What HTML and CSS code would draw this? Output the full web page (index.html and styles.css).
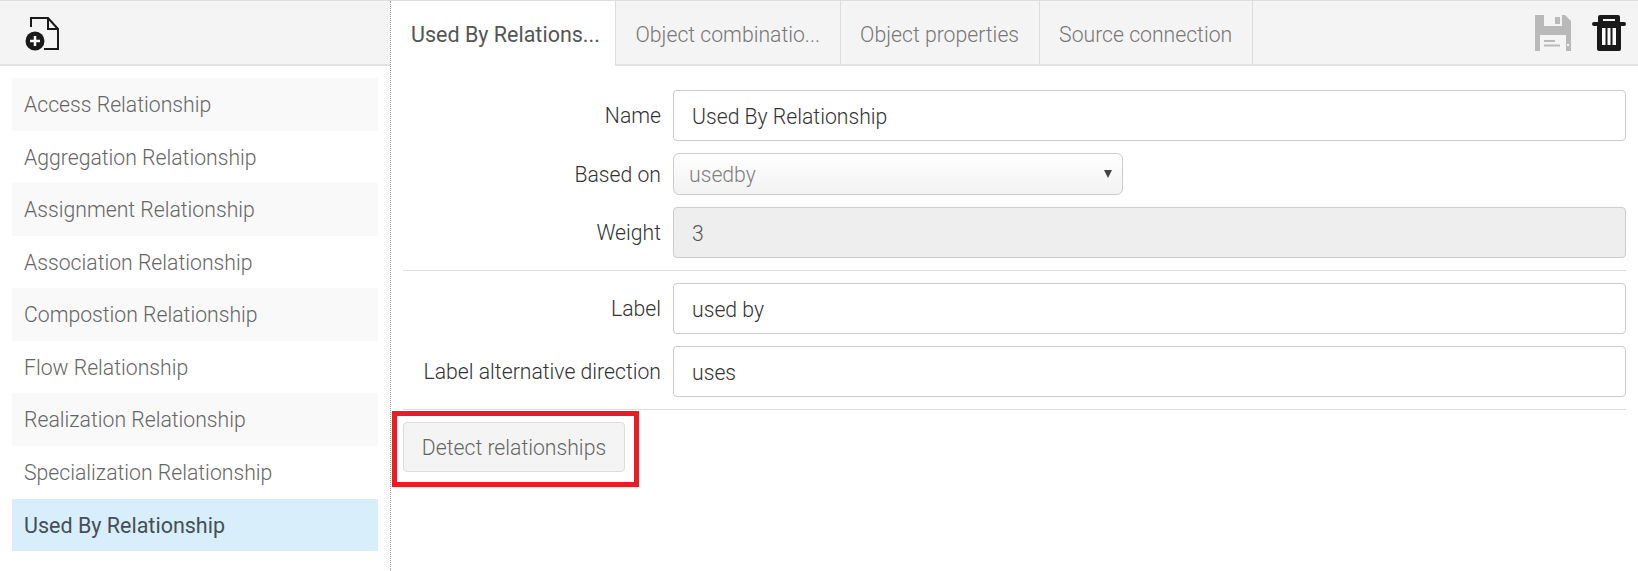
FILE: index.html
```html
<!DOCTYPE html>
<html lang="en">
<head>
  <meta charset="UTF-8" />
  <title>Relationship types</title>
  <link rel="stylesheet" href="styles.css">
</head>
<body>
  <div class="app">
    <aside class="sidebar">
      <div class="sidebar-bar">
        <svg class="icon-new" width="35" height="36" viewBox="0 0 35 36">
          <path d="M6 10V1h17l10 11v20H19" fill="none" stroke="#1a1a1a" stroke-width="2"/>
          <path d="M23 1v11h10" fill="none" stroke="#1a1a1a" stroke-width="2"/>
          <circle cx="10" cy="24" r="9.500" fill="#1a1a1a"/>
          <path d="M5 24h10M10 19v10" stroke="#fff" stroke-width="2.500"/>
        </svg>
      </div>
      <ul class="type-list">
        <li>Access Relationship</li>
        <li>Aggregation Relationship</li>
        <li>Assignment Relationship</li>
        <li>Association Relationship</li>
        <li>Compostion Relationship</li>
        <li>Flow Relationship</li>
        <li>Realization Relationship</li>
        <li>Specialization Relationship</li>
        <li class="active">Used By Relationship</li>
      </ul>
    </aside>

    <main class="content">
      <div class="tabs">
        <a class="tab active">Used By Relations...</a>
        <a class="tab">Object combinatio...</a>
        <a class="tab">Object properties</a>
        <a class="tab">Source connection</a>
        <div class="tools">
          <svg width="36" height="36" viewBox="0 0 36 36">
            <path d="M0 0h30l6 6v30H0z" fill="#b9b9b9"/>
            <rect x="9" y="0" width="18" height="11" fill="#f4f4f4"/>
            <rect x="20" y="2" width="5" height="7" fill="#b9b9b9"/>
            <rect x="5" y="20" width="26" height="16" fill="#f4f4f4"/>
            <path d="M9 26h11M9 30.500h16" stroke="#b9b9b9" stroke-width="2"/>
            <rect x="32" y="29" width="2" height="2" fill="#f4f4f4"/>
          </svg>
          <svg width="34" height="36" viewBox="0 0 34 36">
            <rect x="6" y="0" width="22" height="9" rx="2" fill="#1a1a1a"/>
            <rect x="11" y="4" width="12" height="2" fill="#f4f4f4"/>
            <rect x="0" y="7" width="34" height="4" rx="2" fill="#1a1a1a"/>
            <path d="M5 11h24v23a2 2 0 0 1-2 2H7a2 2 0 0 1-2-2z" fill="#1a1a1a"/>
            <rect x="10" y="13" width="14" height="17" fill="#fff"/>
            <path d="M14.500 13v17M19.500 13v17" stroke="#1a1a1a" stroke-width="2"/>
          </svg>
        </div>
      </div>

      <form class="form">
        <div class="row">
          <label>Name</label>
          <input class="field" type="text" value="Used By Relationship">
        </div>
        <div class="row">
          <label>Based on</label>
          <div class="select-wrap">
            <select class="select"><option>usedby</option></select>
          </div>
        </div>
        <div class="row">
          <label>Weight</label>
          <input class="field" type="text" value="3" disabled>
        </div>
        <hr>
        <div class="row">
          <label>Label</label>
          <input class="field" type="text" value="used by">
        </div>
        <div class="row">
          <label>Label alternative direction</label>
          <input class="field" type="text" value="uses">
        </div>
        <hr>
        <div class="actions">
          <button class="btn" type="button">Detect relationships</button>
          <span class="highlight"></span>
        </div>
      </form>
    </main>
  </div>
</body>
</html>
```

FILE: styles.css
```css
* {
  box-sizing: border-box;
}
body {
  margin: 0;
  font-family: Roboto, "Liberation Sans", sans-serif;
  font-size: 21.2px;
  font-weight: 300;
  color: #333;
  background: #fff;
}
.app {
  display: flex;
  height: 571px;
  overflow: hidden;
  border-top: 1px solid #ddd;
}
.sidebar {
  width: 391px;
  flex: none;
  border-right: 1px dotted #999;
}
.sidebar-bar {
  height: 65px;
  padding: 16px 0 0 25px;
  background: #f4f4f4;
  border-bottom: 2px solid #e2e2e2;
}
.icon-new {
  display: block;
}
.type-list {
  list-style: none;
  margin: 12px 12px 0;
  padding: 0;
}
.type-list li {
  padding: 13px 12px 11px;
  line-height: 28.57px;
  color: #666;
}
.type-list li:nth-child(odd) {
  background: #f9f9f9;
}
.type-list li.active {
  background: #d8eefa;
  color: #444f57;
  font-size: 21.5px;
  font-weight: 400;
}
.content {
  flex: 1;
  min-width: 0;
}
.tabs {
  display: flex;
  height: 65px;
  background: #f4f4f4;
  border-bottom: 2px solid #e2e2e2;
}
.tab {
  display: flex;
  align-items: center;
  height: 65px;
  padding: 1px 19.500px 0;
  color: #777;
  border-right: 1px solid #ddd;
  white-space: nowrap;
}
.tab.active {
  width: 225px;
  padding: 1px 0 0 20px;
  background: #fff;
  color: #555;
  font-size: 21.5px;
  font-weight: 400;
}
.tools {
  margin-left: auto;
  display: flex;
  gap: 21px;
  padding: 14px 12px 0 0;
}
.tools svg {
  display: block;
}
.form {
  padding: 24px 12px 0;
}
.row {
  display: flex;
  align-items: center;
  gap: 12px;
  margin-bottom: 12px;
}
.row label {
  width: 258px;
  flex: none;
  text-align: right;
}
.field {
  flex: 1;
  min-width: 0;
  height: 51px;
  padding: 2px 18px 0;
  font: inherit;
  color: #333;
  background: #fff;
  border: 1px solid #ccc;
  border-radius: 4px;
}
.field:disabled {
  background: #eee;
  color: #555;
  opacity: 1;
}
.select-wrap {
  position: relative;
  width: 450px;
}
.select-wrap::after {
  content: "";
  position: absolute;
  right: 11px;
  top: 17px;
  border-left: 4.500px solid transparent;
  border-right: 4.500px solid transparent;
  border-top: 8px solid #444;
}
.select {
  display: block;
  width: 100%;
  height: 42px;
  padding: 0 15px;
  font: inherit;
  color: #808080;
  background: linear-gradient(#fff, #f2f2f2);
  border: 1px solid #ccc;
  border-radius: 6px;
  appearance: none;
}
hr {
  height: 1px;
  margin: 12px 0;
  border: 0;
  background: #ddd;
}
.actions {
  position: relative;
}
.btn {
  display: block;
  width: 222px;
  height: 50px;
  font: inherit;
  color: #666;
  background: #f4f4f4;
  border: 1px solid #ddd;
  border-radius: 4px;
}
.highlight {
  position: absolute;
  left: -11px;
  top: -11px;
  width: 247px;
  height: 76px;
  border: 5px solid #ed1c24;
  pointer-events: none;
}
```
